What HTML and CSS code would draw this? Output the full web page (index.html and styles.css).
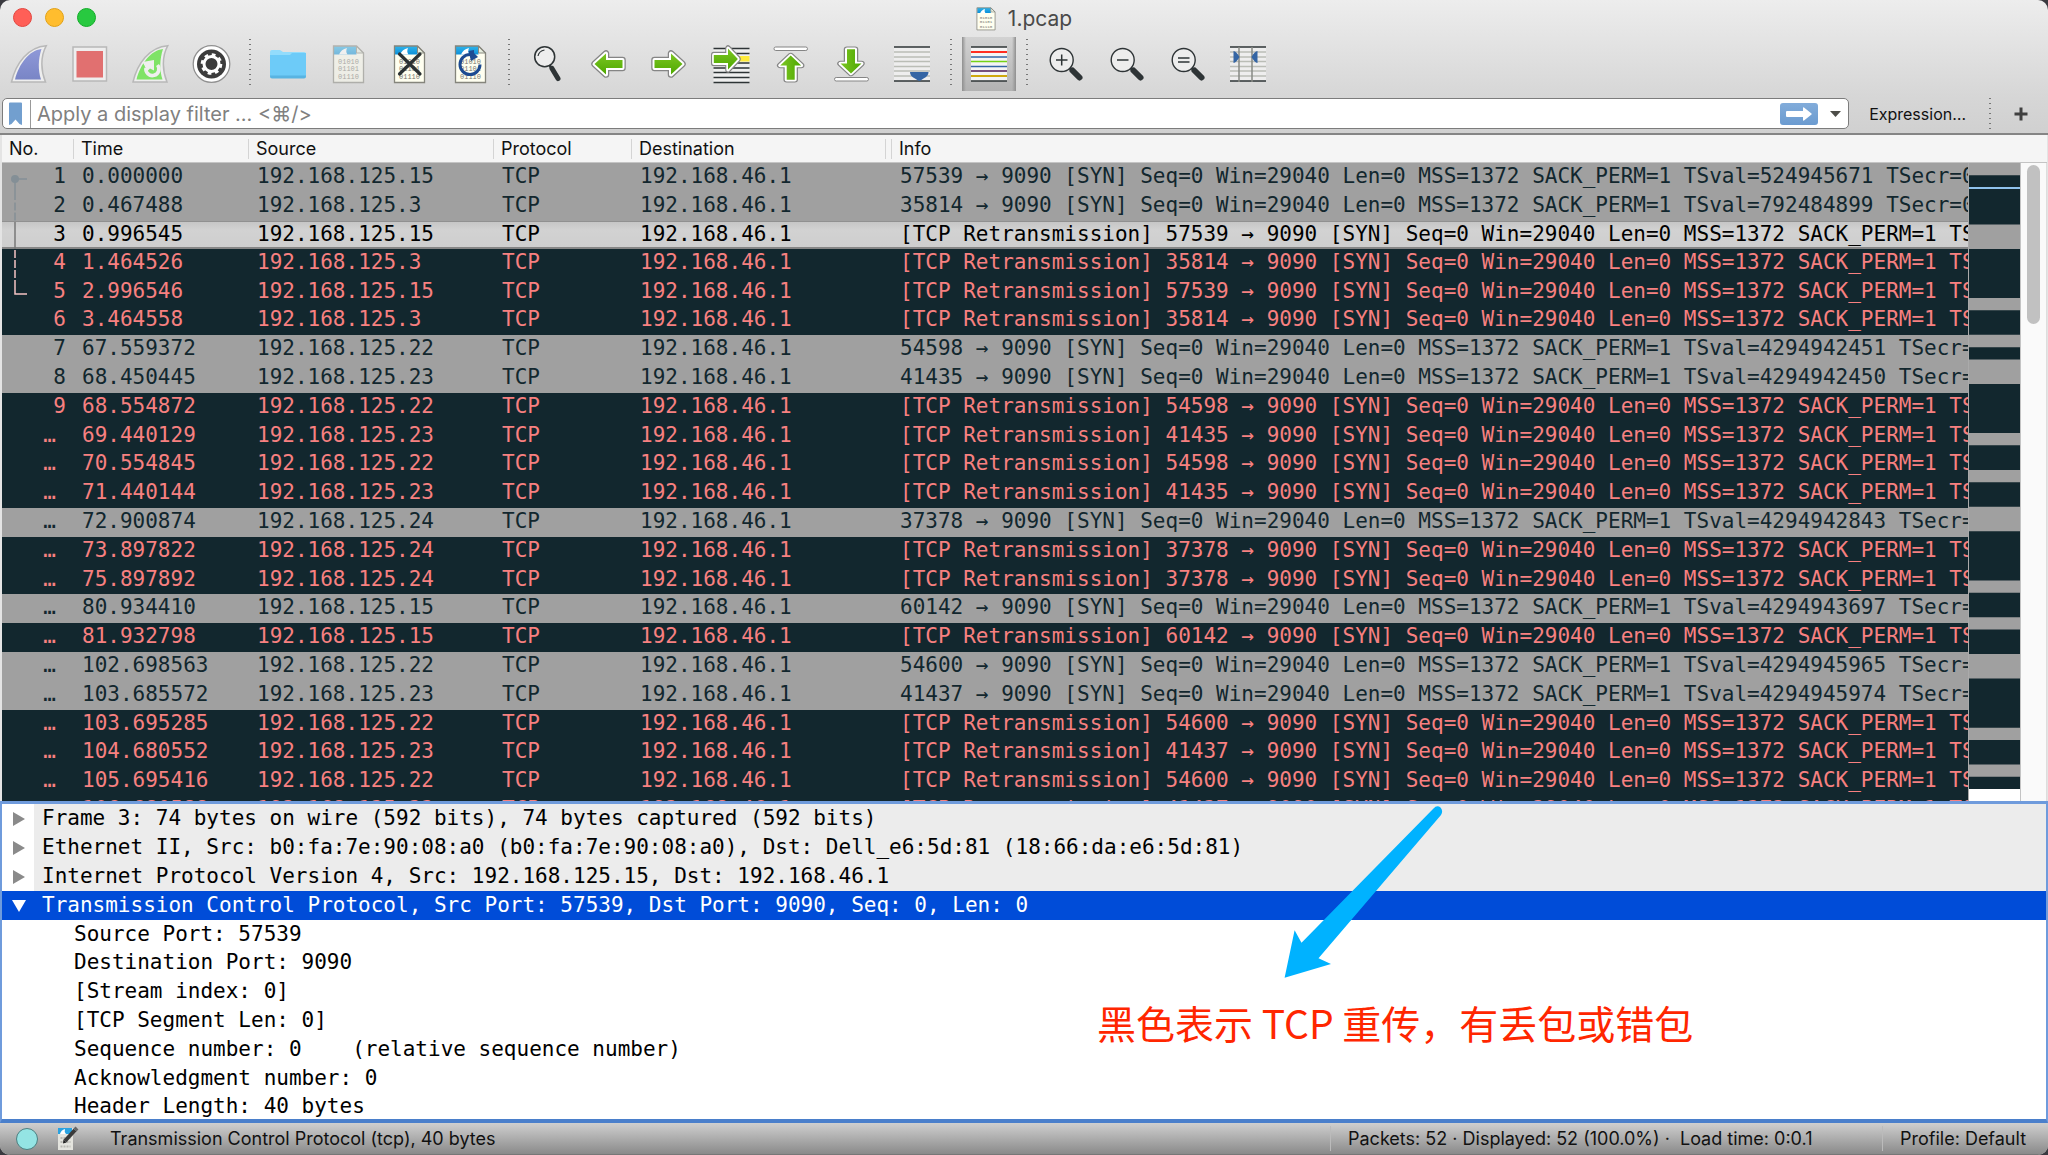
FILE: index.html
```
<!DOCTYPE html>
<html lang="en">
<head>
    <meta charset="UTF-8">
    <meta name="viewport" content="width=device-width, initial-scale=1.0">
    <title>1.pcap</title>
    <link rel="stylesheet" href="styles.css">
</head>
<body>
    <!-- Shared icon shapes -->
    <svg class="sprite" aria-hidden="true">
        <linearGradient id="green" x1="0" y1="0" x2="0" y2="1">
            <stop offset="0" stop-color="#7cc623"/>
            <stop offset="1" stop-color="#4ea800"/>
        </linearGradient>
        <linearGradient id="sky" x1="0" y1="0" x2="0" y2="1">
            <stop offset="0" stop-color="#30b4ea"/>
            <stop offset="1" stop-color="#0c90da"/>
        </linearGradient>
        <linearGradient id="fin" x1="0" y1="0" x2="0" y2="1">
            <stop offset="0" stop-color="#8f99d8"/>
            <stop offset="1" stop-color="#7985c6"/>
        </linearGradient>
        <symbol id="doc" viewBox="0 0 54 54">
            <path d="M11.5 9h23l7 7v29.500h-30z" fill="#fffff0"/>
            <path d="M12 9h22.500v8.500H12z" fill="url(#sky)"/>
            <path d="M17 17.500c1.500-3.500 4-5.500 8-6.500-1 2.500-1 4.500.5 6.500z" fill="#fff"/>
            <path d="M34.500 9v7h7z" fill="#e8efe0" stroke="#8a8a80"/>
            <path d="M11.500 9h23l7 7v29.500h-30z" fill="none" stroke="#85857c" stroke-width="1.300"/>
            <g class="bits">
                <text x="16" y="27">01010</text>
                <text x="16" y="34">01101</text>
                <text x="16" y="42">01110</text>
            </g>
        </symbol>
        <symbol id="arrow" viewBox="0 0 54 54">
            <path d="M13.500 27 25 16.500V23h16.500v8H25v6.500z" fill="none" stroke="#858585" stroke-width="6.500" stroke-linejoin="round"/>
            <path d="M13.500 27 25 16.500V23h16.500v8H25v6.500z" fill="url(#green)" stroke="#fff" stroke-width="4" stroke-linejoin="round"/>
            <path d="M13.500 27 25 16.500V23h16.500v8H25v6.500z" fill="url(#green)"/>
        </symbol>
        <symbol id="lens" viewBox="0 0 54 54">
            <circle cx="23.700" cy="23" r="11.500" fill="#ededed" stroke="#2e3436" stroke-width="1.400"/>
            <path d="m32 31.500 2 1.500" stroke="#2e3436" stroke-width="3"/>
            <path d="m34.500 33.500 7 7" stroke="#2e3436" stroke-width="6" stroke-linecap="round"/>
        </symbol>
    </svg>

    <div class="window">
        <header class="titlebar">
            <div class="lights">
                <button class="light close" aria-label="Close"></button>
                <button class="light minimize" aria-label="Minimize"></button>
                <button class="light zoom" aria-label="Zoom"></button>
            </div>
            <svg class="title-icon" viewBox="10 8 33 39"><use href="#doc" width="54" height="54"/></svg>
            <h1>1.pcap</h1>
        </header>

        <nav class="toolbar" aria-label="Main toolbar">
            <button class="tool" aria-label="Start capture">
                <svg viewBox="0 0 54 54">
                    <path d="M9.500 45C14 26 26 10 44.300 8.700 38 20 39 34 43.500 45z" fill="#eee" stroke="#b8b8b8" stroke-width="1.500"/>
                    <path d="M13 42.500C17 27 27 13.500 39.500 12 36 23 36 33 39 42.500z" fill="url(#fin)"/>
                </svg>
            </button>
            <button class="tool" aria-label="Stop capture">
                <svg viewBox="0 0 54 54">
                    <path d="M10 10h33.500v34H10z" fill="#eee" stroke="#b8b8b8" stroke-width="1.500"/>
                    <path d="M13.500 14h26.500v26.500H13.500z" fill="#e17070"/>
                </svg>
            </button>
            <button class="tool" aria-label="Restart capture">
                <svg viewBox="0 0 54 54">
                    <path d="M9 45C13.500 26 25.500 10 43.800 8.700 37.500 20 38.500 34 43 45z" fill="#eee" stroke="#b8b8b8" stroke-width="1.500"/>
                    <path d="M12.500 42.500C16.500 27 26.500 13.500 39 12 35.500 23 35.500 33 38.500 42.500z" fill="#7fe367"/>
                    <path d="M33.500 28a6.500 6.500 0 1 1-11.500 3" fill="none" stroke="#efefef" stroke-width="3.600"/>
                    <path d="M18.500 25 30 23v10.500l-4-2-3 3-2.500-6z" fill="#efefef"/>
                </svg>
            </button>
            <button class="tool" aria-label="Capture options">
                <svg viewBox="0 0 54 54">
                    <circle cx="26.500" cy="27" r="18.300" fill="#fff" stroke="#909090" stroke-width="1.300"/>
                    <circle cx="26.500" cy="27" r="14.500" fill="#3c3c3c"/>
                    <circle cx="26.500" cy="27" r="7.500" fill="none" stroke="#fff" stroke-width="3"/>
                    <circle cx="26.500" cy="27" r="9.500" fill="none" stroke="#fff" stroke-width="2.600" stroke-dasharray="3.730 3.730"/>
                </svg>
            </button>
            <span class="divider"></span>
            <button class="tool" aria-label="Open file">
                <svg viewBox="0 0 54 54">
                    <path d="M9 15q0-2 2-2h8l3 2h21q2 0 2 2v5H9z" fill="#92dcfc"/>
                    <path d="M9 18h20l2-2h14v23q0 2-2 2H11q-2 0-2-2z" fill="#6dcbf8"/>
                    <path d="M9 38.500h36v.5q0 2.500-2 2.500H11q-2 0-2-2.500z" fill="#58b4e2"/>
                </svg>
            </button>
            <button class="tool disabled" aria-label="Save file" disabled>
                <svg viewBox="0 0 54 54"><use href="#doc"/></svg>
            </button>
            <button class="tool" aria-label="Close file">
                <svg viewBox="0 0 54 54">
                    <use href="#doc"/>
                    <path d="m16.500 17 20.500 20M37 17 16.500 37" stroke="#2b3234" stroke-width="3.200" stroke-linecap="round"/>
                </svg>
            </button>
            <button class="tool" aria-label="Reload file">
                <svg viewBox="0 0 54 54">
                    <use href="#doc"/>
                    <path d="M36 27.500A10 10 0 1 1 26 17.500" fill="none" stroke="#1c4a91" stroke-width="3"/>
                    <path d="m24.500 14 5.500-1v3l4 4-7 4z" fill="#1c4a91"/>
                </svg>
            </button>
            <span class="divider"></span>
            <button class="tool" aria-label="Find packet">
                <svg viewBox="0 0 54 54">
                    <circle cx="24.700" cy="19.700" r="10" fill="#ededed" stroke="#2e3436" stroke-width="1.500"/>
                    <path d="M18 19q1-5 6.500-6" fill="none" stroke="#2e3436" stroke-width="1.200"/>
                    <path d="m29.500 28 1.500 2.500" stroke="#2e3436" stroke-width="2.500"/>
                    <path d="m32 31.500 6 10" stroke="#2e3436" stroke-width="5" stroke-linecap="round"/>
                </svg>
            </button>
            <button class="tool" aria-label="Previous packet">
                <svg viewBox="0 0 54 54"><use href="#arrow"/></svg>
            </button>
            <button class="tool" aria-label="Next packet">
                <svg viewBox="0 0 54 54"><use href="#arrow" transform="matrix(-1 0 0 1 54 0)"/></svg>
            </button>
            <button class="tool" aria-label="Go to packet">
                <svg viewBox="0 0 54 54">
                    <path d="M10.500 11h36v35h-36z" fill="#efefef"/>
                    <path d="M34 19h12.500v5.500H34z" fill="#ffeb3b"/>
                    <path d="M10.500 11.500h36M10.500 16.500h36M10.500 26h36M10.500 31h36M10.500 35.500h36M10.500 40.500h36M10.500 45.500h36" stroke="#2e3436" stroke-width="1.500"/>
                    <use href="#arrow" transform="matrix(-.86 0 0 1 46.500 -5)"/>
                </svg>
            </button>
            <button class="tool" aria-label="First packet">
                <svg viewBox="0 0 54 54">
                    <rect x="10" y="10" width="33.500" height="3.500" rx="1.700" fill="#fff" stroke="#858585"/>
                    <use href="#arrow" transform="matrix(0 .86 1 0 -.3 7)"/>
                </svg>
            </button>
            <button class="tool" aria-label="Last packet">
                <svg viewBox="0 0 54 54">
                    <rect x="9.500" y="40.500" width="34" height="3.500" rx="1.700" fill="#fff" stroke="#858585"/>
                    <use href="#arrow" transform="matrix(0 -.86 1 0 -1 48)"/>
                </svg>
            </button>
            <button class="tool" aria-label="Auto scroll">
                <svg viewBox="0 0 54 54">
                    <path d="M8 10h36v34H8z" fill="#eee"/>
                    <path d="M8 15h36M8 20h36M8 24.500h36M8 29.500h36M8 34h36M8 39h36" stroke="#babdb6" stroke-width="1.600"/>
                    <path d="M8 10h36M8 44h36" stroke="#2e3436" stroke-width="1.600"/>
                    <path d="M24 35h18.500q0 4-5 6.500-3 2-4.200 2.500-1.200-.5-4.300-2.500-5-2.500-5-6.500z" fill="#3465a4"/>
                </svg>
            </button>
            <span class="divider"></span>
            <button class="tool pressed" aria-label="Colorize packets" aria-pressed="true">
                <svg viewBox="0 0 54 54">
                    <path d="M9 10h36v34H9z" fill="#f4f4f4"/>
                    <path d="M9 10h36M9 44h36" stroke="#2e3436" stroke-width="1.600"/>
                    <path d="M9 15h36" stroke="#ff2d21" stroke-width="2"/>
                    <path d="M9 20h36M9 29.500h36" stroke="#3465a4" stroke-width="1.500"/>
                    <path d="M9 24.500h36" stroke="#73d216" stroke-width="1.500"/>
                    <path d="M9 34h36" stroke="#75507b" stroke-width="1.800"/>
                    <path d="M9 39h36" stroke="#cfa80e" stroke-width="2"/>
                </svg>
            </button>
            <span class="divider"></span>
            <button class="tool" aria-label="Zoom in">
                <svg viewBox="0 0 54 54">
                    <use href="#lens"/>
                    <path d="M18 23h11.500M23.700 17.500v11" stroke="#2e3436" stroke-width="1.500"/>
                </svg>
            </button>
            <button class="tool" aria-label="Zoom out">
                <svg viewBox="0 0 54 54">
                    <use href="#lens"/>
                    <path d="M18 23h11.500" stroke="#2e3436" stroke-width="1.500"/>
                </svg>
            </button>
            <button class="tool" aria-label="Normal size">
                <svg viewBox="0 0 54 54">
                    <use href="#lens"/>
                    <path d="M18 21h11.500M18 25h11.500" stroke="#2e3436" stroke-width="1.500"/>
                </svg>
            </button>
            <button class="tool" aria-label="Resize columns">
                <svg viewBox="0 0 54 54">
                    <path d="M9 10h36v34H9z" fill="#eee"/>
                    <path d="M9 15h36M9 20h36M9 24.500h36M9 29.500h36M9 34h36M9 39h36" stroke="#babdb6" stroke-width="1.600"/>
                    <path d="M9 10h36M9 44h36" stroke="#2e3436" stroke-width="1.600"/>
                    <path d="M18 10v35M31 10v35" stroke="#888a85" stroke-width="1.500"/>
                    <path d="M12.500 14q3 .5 6 6-3 5.500-6 6zM36.500 14q-3 .5-6 6 3 5.500 6 6z" fill="#3465a4"/>
                </svg>
            </button>
        </nav>

        <form class="filter-bar">
            <div class="filter-box">
                <button type="button" class="bookmark" aria-label="Bookmarks">
                    <svg viewBox="0 0 14 24"><path d="M0 1.500Q0 .500 1 .500h11q1 0 1 1V23l-2.500-1L6.500 17.500 2.500 22 0 23z" fill="#729fcf"/></svg>
                </button>
                <input type="text" class="filter-input" aria-label="Display filter" placeholder="Apply a display filter ... &lt;⌘/&gt;">
                <button type="button" class="apply" aria-label="Apply filter">
                    <svg viewBox="0 0 38 22"><path d="M7 8q-1 0-1 1v4q0 1 1 1h16v3q0 1 1 .5l7.500-6q.5-.500 0-1L24 4.500q-1-.5-1 .5v3z" fill="#fff"/></svg>
                </button>
                <button type="button" class="history" aria-label="Filter history">
                    <svg viewBox="0 0 12 6"><path d="M0 0h11L5.500 6z" fill="#4d4d48"/></svg>
                </button>
            </div>
            <button type="button" class="expression">Expression…</button>
            <span class="divider"></span>
            <button type="button" class="add" aria-label="Add filter button">
                <svg viewBox="0 0 14 14"><path d="M7 .500v13M.500 7h13" stroke="#404040" stroke-width="3"/></svg>
            </button>
        </form>

        <section class="packet-pane">
            <div class="packet-list">
                <table>
                    <colgroup>
                        <col class="col-no"><col class="col-time"><col class="col-source"><col class="col-protocol"><col class="col-dest"><col class="col-spare"><col>
                    </colgroup>
                    <thead>
                        <tr><th>No.</th><th>Time</th><th>Source</th><th>Protocol</th><th>Destination</th><th></th><th>Info</th></tr>
                    </thead>
                    <tbody>
                        <tr class="syn"><td>1</td><td>0.000000</td><td>192.168.125.15</td><td>TCP</td><td>192.168.46.1</td><td></td><td>57539 → 9090 [SYN] Seq=0 Win=29040 Len=0 MSS=1372 SACK_PERM=1 TSval=524945671 TSecr=0</td></tr>
                        <tr class="syn"><td>2</td><td>0.467488</td><td>192.168.125.3</td><td>TCP</td><td>192.168.46.1</td><td></td><td>35814 → 9090 [SYN] Seq=0 Win=29040 Len=0 MSS=1372 SACK_PERM=1 TSval=792484899 TSecr=0</td></tr>
                        <tr class="selected"><td>3</td><td>0.996545</td><td>192.168.125.15</td><td>TCP</td><td>192.168.46.1</td><td></td><td>[TCP Retransmission] 57539 → 9090 [SYN] Seq=0 Win=29040 Len=0 MSS=1372 SACK_PERM=1 TSval</td></tr>
                        <tr class="bad"><td>4</td><td>1.464526</td><td>192.168.125.3</td><td>TCP</td><td>192.168.46.1</td><td></td><td>[TCP Retransmission] 35814 → 9090 [SYN] Seq=0 Win=29040 Len=0 MSS=1372 SACK_PERM=1 TSval</td></tr>
                        <tr class="bad"><td>5</td><td>2.996546</td><td>192.168.125.15</td><td>TCP</td><td>192.168.46.1</td><td></td><td>[TCP Retransmission] 57539 → 9090 [SYN] Seq=0 Win=29040 Len=0 MSS=1372 SACK_PERM=1 TSval</td></tr>
                        <tr class="bad"><td>6</td><td>3.464558</td><td>192.168.125.3</td><td>TCP</td><td>192.168.46.1</td><td></td><td>[TCP Retransmission] 35814 → 9090 [SYN] Seq=0 Win=29040 Len=0 MSS=1372 SACK_PERM=1 TSval</td></tr>
                        <tr class="syn"><td>7</td><td>67.559372</td><td>192.168.125.22</td><td>TCP</td><td>192.168.46.1</td><td></td><td>54598 → 9090 [SYN] Seq=0 Win=29040 Len=0 MSS=1372 SACK_PERM=1 TSval=4294942451 TSecr=0</td></tr>
                        <tr class="syn"><td>8</td><td>68.450445</td><td>192.168.125.23</td><td>TCP</td><td>192.168.46.1</td><td></td><td>41435 → 9090 [SYN] Seq=0 Win=29040 Len=0 MSS=1372 SACK_PERM=1 TSval=4294942450 TSecr=0</td></tr>
                        <tr class="bad"><td>9</td><td>68.554872</td><td>192.168.125.22</td><td>TCP</td><td>192.168.46.1</td><td></td><td>[TCP Retransmission] 54598 → 9090 [SYN] Seq=0 Win=29040 Len=0 MSS=1372 SACK_PERM=1 TSval</td></tr>
                        <tr class="bad"><td class="cut">…</td><td>69.440129</td><td>192.168.125.23</td><td>TCP</td><td>192.168.46.1</td><td></td><td>[TCP Retransmission] 41435 → 9090 [SYN] Seq=0 Win=29040 Len=0 MSS=1372 SACK_PERM=1 TSval</td></tr>
                        <tr class="bad"><td class="cut">…</td><td>70.554845</td><td>192.168.125.22</td><td>TCP</td><td>192.168.46.1</td><td></td><td>[TCP Retransmission] 54598 → 9090 [SYN] Seq=0 Win=29040 Len=0 MSS=1372 SACK_PERM=1 TSval</td></tr>
                        <tr class="bad"><td class="cut">…</td><td>71.440144</td><td>192.168.125.23</td><td>TCP</td><td>192.168.46.1</td><td></td><td>[TCP Retransmission] 41435 → 9090 [SYN] Seq=0 Win=29040 Len=0 MSS=1372 SACK_PERM=1 TSval</td></tr>
                        <tr class="syn"><td class="cut">…</td><td>72.900874</td><td>192.168.125.24</td><td>TCP</td><td>192.168.46.1</td><td></td><td>37378 → 9090 [SYN] Seq=0 Win=29040 Len=0 MSS=1372 SACK_PERM=1 TSval=4294942843 TSecr=0</td></tr>
                        <tr class="bad"><td class="cut">…</td><td>73.897822</td><td>192.168.125.24</td><td>TCP</td><td>192.168.46.1</td><td></td><td>[TCP Retransmission] 37378 → 9090 [SYN] Seq=0 Win=29040 Len=0 MSS=1372 SACK_PERM=1 TSval</td></tr>
                        <tr class="bad"><td class="cut">…</td><td>75.897892</td><td>192.168.125.24</td><td>TCP</td><td>192.168.46.1</td><td></td><td>[TCP Retransmission] 37378 → 9090 [SYN] Seq=0 Win=29040 Len=0 MSS=1372 SACK_PERM=1 TSval</td></tr>
                        <tr class="syn"><td class="cut">…</td><td>80.934410</td><td>192.168.125.15</td><td>TCP</td><td>192.168.46.1</td><td></td><td>60142 → 9090 [SYN] Seq=0 Win=29040 Len=0 MSS=1372 SACK_PERM=1 TSval=4294943697 TSecr=0</td></tr>
                        <tr class="bad"><td class="cut">…</td><td>81.932798</td><td>192.168.125.15</td><td>TCP</td><td>192.168.46.1</td><td></td><td>[TCP Retransmission] 60142 → 9090 [SYN] Seq=0 Win=29040 Len=0 MSS=1372 SACK_PERM=1 TSval</td></tr>
                        <tr class="syn"><td class="cut">…</td><td>102.698563</td><td>192.168.125.22</td><td>TCP</td><td>192.168.46.1</td><td></td><td>54600 → 9090 [SYN] Seq=0 Win=29040 Len=0 MSS=1372 SACK_PERM=1 TSval=4294945965 TSecr=0</td></tr>
                        <tr class="syn"><td class="cut">…</td><td>103.685572</td><td>192.168.125.23</td><td>TCP</td><td>192.168.46.1</td><td></td><td>41437 → 9090 [SYN] Seq=0 Win=29040 Len=0 MSS=1372 SACK_PERM=1 TSval=4294945974 TSecr=0</td></tr>
                        <tr class="bad"><td class="cut">…</td><td>103.695285</td><td>192.168.125.22</td><td>TCP</td><td>192.168.46.1</td><td></td><td>[TCP Retransmission] 54600 → 9090 [SYN] Seq=0 Win=29040 Len=0 MSS=1372 SACK_PERM=1 TSval</td></tr>
                        <tr class="bad"><td class="cut">…</td><td>104.680552</td><td>192.168.125.23</td><td>TCP</td><td>192.168.46.1</td><td></td><td>[TCP Retransmission] 41437 → 9090 [SYN] Seq=0 Win=29040 Len=0 MSS=1372 SACK_PERM=1 TSval</td></tr>
                        <tr class="bad"><td class="cut">…</td><td>105.695416</td><td>192.168.125.22</td><td>TCP</td><td>192.168.46.1</td><td></td><td>[TCP Retransmission] 54600 → 9090 [SYN] Seq=0 Win=29040 Len=0 MSS=1372 SACK_PERM=1 TSval</td></tr>
                        <tr class="bad"><td class="cut">…</td><td>106.680588</td><td>192.168.125.23</td><td>TCP</td><td>192.168.46.1</td><td></td><td>[TCP Retransmission] 41437 → 9090 [SYN] Seq=0 Win=29040 Len=0 MSS=1372 SACK_PERM=1 TSval</td></tr>
                    </tbody>
                </table>
                <!-- Conversation marker: packets 1, 3 and 5 -->
                <svg class="conversation" viewBox="0 0 26 140" aria-hidden="true">
                    <circle cx="13" cy="16" r="4" fill="#848f96"/>
                    <path d="M13 16h12M13 16v21M13 39.500v8M13 49.500v8" fill="none" stroke="#848f96" stroke-width="1.500"/>
                    <path d="M13 59v27" stroke="#777" stroke-width="1.500"/>
                    <path d="M13 87v8M13 97v8M13 107v8M13 117v14h12" fill="none" stroke="#f5c4c4" stroke-width="1.500"/>
                </svg>
            </div>
            <div class="scroll-side">
                <div class="scroll-head"></div>
                <div class="scroll-body">
                    <!-- One unit of height per packet -->
                    <svg class="minimap" viewBox="0 0 51 52" preserveAspectRatio="none" aria-hidden="true">
                        <path d="M0 0h51v51H0z" fill="#a0a0a0"/>
                        <path d="M0 1h51v4H0zM0 7h51v4H0zM0 12h51v2H0zM0 15h51v1H0zM0 18h51v4H0zM0 23h51v2H0zM0 26h51v2H0zM0 30h51v4H0zM0 35h51v2H0zM0 38h51v2H0zM0 42h51v4H0zM0 47h51v2H0zM0 50h51v1H0z" fill="#12272e"/>
                        <path d="M0 1.950h51v.16H0z" fill="#8fc3ee"/>
                    </svg>
                    <div class="scrollbar"><div class="thumb"></div></div>
                </div>
            </div>
        </section>

        <section class="detail-pane">
            <ul class="tree">
                <li class="node"><button class="expander" aria-label="Expand"><svg viewBox="0 0 14 14"><path d="M1 0v14l12-7z" fill="#8a8a8a"/></svg></button><span>Frame 3: 74 bytes on wire (592 bits), 74 bytes captured (592 bits)</span></li>
                <li class="node"><button class="expander" aria-label="Expand"><svg viewBox="0 0 14 14"><path d="M1 0v14l12-7z" fill="#8a8a8a"/></svg></button><span>Ethernet II, Src: b0:fa:7e:90:08:a0 (b0:fa:7e:90:08:a0), Dst: Dell_e6:5d:81 (18:66:da:e6:5d:81)</span></li>
                <li class="node"><button class="expander" aria-label="Expand"><svg viewBox="0 0 14 14"><path d="M1 0v14l12-7z" fill="#8a8a8a"/></svg></button><span>Internet Protocol Version 4, Src: 192.168.125.15, Dst: 192.168.46.1</span></li>
                <li class="node open"><button class="expander" aria-label="Collapse"><svg viewBox="0 0 14 14"><path d="M0 1h14L7 13z" fill="#fff"/></svg></button><span>Transmission Control Protocol, Src Port: 57539, Dst Port: 9090, Seq: 0, Len: 0</span></li>
                <li class="leaf">Source Port: 57539</li>
                <li class="leaf">Destination Port: 9090</li>
                <li class="leaf">[Stream index: 0]</li>
                <li class="leaf">[TCP Segment Len: 0]</li>
                <li class="leaf">Sequence number: 0    (relative sequence number)</li>
                <li class="leaf">Acknowledgment number: 0</li>
                <li class="leaf">Header Length: 40 bytes</li>
            </ul>
            <svg class="pointer" viewBox="0 0 160 174" aria-hidden="true">
                <path d="M.600 173.700 10.600 126.300 17.500 138.700 149.500 4.500Q153 .500 156.500 3.500 159.500 7 157 11L34.500 154.300 47 160z" fill="#00b2ff"/>
            </svg>
            <p class="note" lang="zh">黑色表示 TCP 重传，有丢包或错包</p>
        </section>

        <footer class="statusbar">
            <button class="expert" aria-label="Expert information"></button>
            <button class="comment" aria-label="Capture comment">
                <svg viewBox="0 0 24 26">
                    <path d="M2 2h15v22H2z" fill="#e4e4de"/>
                    <path d="M2 2h14v6H2z" fill="#2aa2e0"/>
                    <path d="M4 8q1-4 5-5-1 3 1 5z" fill="#fff"/>
                    <path d="M4.500 12h10M4.500 16h10M4.500 20.500h10" stroke="#b8b8b2" stroke-width="2" stroke-dasharray="2 1"/>
                    <path d="M9 15 19 4" stroke="#3a3a3a" stroke-width="4"/>
                    <path d="m19 4 2-2" stroke="#666" stroke-width="4"/>
                    <path d="m7 17.500.5-4 3 3z" fill="#222"/>
                </svg>
            </button>
            <span class="status-field">Transmission Control Protocol (tcp), 40 bytes</span>
            <span class="status-packets">Packets: 52 · Displayed: 52 (100.0%) ·  Load time: 0:0.1</span>
            <button class="status-profile">Profile: Default</button>
        </footer>
    </div>
</body>
</html>
```
FILE: styles.css
```
* {
    box-sizing: border-box;
}

body {
    margin: 0;
    background: #3a3a40;
    font-family: Inter, "Liberation Sans", sans-serif;
    font-size: 18px;
    color: #111;
}

button {
    padding: 0;
    border: none;
    background: none;
    font: inherit;
    color: inherit;
}

svg {
    display: block;
}

.sprite {
    position: absolute;
    width: 0;
    height: 0;
}

.bits text {
    font: 7px "Liberation Mono", monospace;
    fill: #77776f;
}

.window {
    display: flex;
    flex-direction: column;
    height: 100vh;
    border-radius: 10px;
    overflow: hidden;
    background: linear-gradient(#ededed, #d6d6d6 98px, #d0d0d0 134px);
}

/* Title bar */
.titlebar {
    display: flex;
    align-items: center;
    justify-content: center;
    gap: 12px;
    height: 37px;
    position: relative;
}

.lights {
    position: absolute;
    left: 13px;
    top: 8px;
    display: flex;
    gap: 13px;
}

.light {
    width: 19px;
    height: 19px;
    border-radius: 50%;
}

.close {
    background: #ff5f57;
    border: 1px solid #e2463f;
}

.minimize {
    background: #ffbd2e;
    border: 1px solid #e1a116;
}

.zoom {
    background: #28c940;
    border: 1px solid #12ac28;
}

.title-icon {
    width: 20px;
    height: 26px;
}

h1 {
    margin: 0;
    font-size: 21px;
    font-weight: 400;
    color: #4a4a4a;
}

/* Toolbar */
.toolbar {
    display: flex;
    gap: 7px;
    height: 61px;
    padding-left: 2px;
}

.tool {
    width: 54px;
    height: 54px;
}

.tool.disabled {
    opacity: 0.5;
}

.tool.pressed {
    background: linear-gradient(90deg, #8f8f8f, transparent 4px, transparent 50px, #8f8f8f), linear-gradient(#d2d2d2, #b2b2b2);
}

.divider {
    width: 8px;
    height: 51px;
    background: radial-gradient(circle, #777 1px, transparent 1px) center top / 4px 5px repeat-y;
}

/* Display filter */
.filter-bar {
    display: flex;
    align-items: center;
    height: 35px;
    padding: 0 20px 4px 2px;
}

.filter-box {
    display: flex;
    align-items: center;
    flex: 1;
    height: 31px;
    border: 1px solid #7c7c7c;
    border-radius: 5px;
    background: #fff;
}

.bookmark {
    padding: 0 7px 0 6px;
    height: 28px;
    border-right: 1px solid #999;
}

.bookmark svg {
    width: 14px;
    height: 24px;
}

.filter-input {
    flex: 1;
    min-width: 0;
    padding: 0 6px;
    border: none;
    background: none;
    font: 20px Inter, "Liberation Sans", sans-serif;
}

.filter-input::placeholder {
    color: #808080;
    opacity: 1;
}

.apply {
    border-radius: 3px;
    background: linear-gradient(#82acda, #6b9bd0);
}

.apply svg {
    width: 38px;
    height: 22px;
}

.history {
    padding: 8px 6px 8px 12px;
}

.history svg {
    width: 12px;
    height: 6px;
}

.expression {
    padding: 0 20px;
    font-size: 16px;
}

.filter-bar .divider {
    height: 35px;
    margin-right: 20px;
}

.add svg {
    width: 14px;
    height: 14px;
}

/* Packet list */
.packet-pane {
    flex: 36 1 0;
    min-height: 0;
    display: flex;
    padding: 0 1px 0 2px;
    border-top: 2px solid #858585;
    background: #e4e4e4;
}

.packet-list {
    flex: 1;
    min-width: 0;
    overflow: hidden;
    position: relative;
}

table {
    width: 100%;
    table-layout: fixed;
    border-collapse: separate;
    border-spacing: 0;
}

.col-no {
    width: 72px;
}

.col-time {
    width: 175px;
}

.col-source {
    width: 245px;
}

.col-protocol {
    width: 138px;
}

.col-dest {
    width: 254px;
}

.col-spare {
    width: 6px;
}

th {
    height: 28px;
    padding: 0 0 0 7px;
    border-bottom: 1px solid #c4c4c4;
    background: linear-gradient(#d4d4d4, #d4d4d4) right center / 1px 20px no-repeat #f5f5f5;
    font-weight: 400;
    text-align: left;
}

th:nth-child(6) {
    padding: 0;
}

th:last-child {
    background: #f5f5f5;
}

td {
    height: 29px;
    padding: 0 0 0 8px;
    font: 21px/27px "DejaVu Sans Mono", monospace;
    vertical-align: top;
    white-space: nowrap;
    overflow: hidden;
}

/* keeps 5 rows at 144px */
tr:nth-child(5n) td {
    height: 28px;
}

td:first-child {
    padding: 0 8px 0 0;
    text-align: right;
}

td.cut:first-child {
    padding-right: 18px;
}

td:nth-child(6) {
    padding: 0;
}

.syn {
    background: #a0a0a0;
    color: #12272e;
}

.bad {
    background: #12272e;
    color: #f78080;
}

.selected td {
    height: 28px;
    line-height: 25px;
    color: #000;
    border-top: 1px solid #909090;
    border-bottom: 2px solid #858585;
    background: linear-gradient(#c6c6c6, #d2d2d2 8px, #cecece);
}

.conversation {
    position: absolute;
    left: 0;
    top: 28px;
    width: 26px;
    height: 140px;
}

.scroll-side {
    display: flex;
    flex-direction: column;
    width: 79px;
}

.scroll-head {
    height: 28px;
    border-bottom: 1px solid #c4c4c4;
    background: #f5f5f5;
}

.scroll-body {
    flex: 1;
    min-height: 0;
    display: flex;
    background: #fff;
}

.minimap {
    width: 53px;
    height: 100%;
    border-left: 1px solid #aaa;
    border-right: 1px solid #c4c4c4;
}

.scrollbar {
    flex: 1;
    padding: 2px 6px;
    border-right: 1px solid #ddd;
    background: #fafafa;
}

.thumb {
    width: 13px;
    height: 25%;
    border-radius: 7px;
    background: #c1c1c1;
}

/* Packet details */
.detail-pane {
    flex: 17 1 0;
    min-height: 0;
    position: relative;
    overflow: hidden;
    border: 2px solid #6f9bdc;
    border-top-width: 3px;
    border-bottom: 4px solid #4a7fcb;
    background: #fff;
}

.tree {
    margin: 0;
    padding: 0;
    list-style: none;
    font: 21px/29px "DejaVu Sans Mono", monospace;
    color: #000;
}

.node {
    display: flex;
    height: 29px;
    background: linear-gradient(#fff, #fff) left / 32px 100% no-repeat #ececec;
}

.node.open {
    background: #004cd8;
    color: #fff;
}

.expander {
    width: 40px;
    padding-left: 10px;
}

.expander svg {
    width: 14px;
    height: 14px;
}

.node span,
.leaf {
    line-height: 28px;
    white-space: pre;
}

.leaf {
    height: 29px;
    padding-left: 72px;
}

.leaf:nth-child(5n) {
    height: 28px;
}

/* Annotation drawn over the details */
.pointer {
    position: absolute;
    left: 1282px;
    top: 0;
    width: 160px;
    height: 174px;
}

.note {
    position: absolute;
    left: 1095px;
    top: 189px;
    margin: 0;
    font: 39px/58px "Noto Sans CJK SC", sans-serif;
    color: #ff2600;
    white-space: nowrap;
}

/* Status bar */
.statusbar {
    display: flex;
    align-items: center;
    height: 32px;
    padding-left: 16px;
    background: linear-gradient(#cfcfcf, #8a8a8a);
    border-bottom: 1px solid #777;
}

.expert {
    width: 22px;
    height: 22px;
    border: 1px solid #4c7f80;
    border-radius: 50%;
    background: #94e4e4;
}

.comment {
    margin: 0 30px 0 18px;
}

.comment svg {
    width: 24px;
    height: 26px;
}

.status-field {
    flex: 1;
}

.status-packets,
.status-profile {
    padding: 2px 0 2px 17px;
    border-left: 1px solid #bbb;
    white-space: pre;
}

.status-packets {
    width: 552px;
}

.status-profile {
    width: 166px;
    text-align: left;
}
```
